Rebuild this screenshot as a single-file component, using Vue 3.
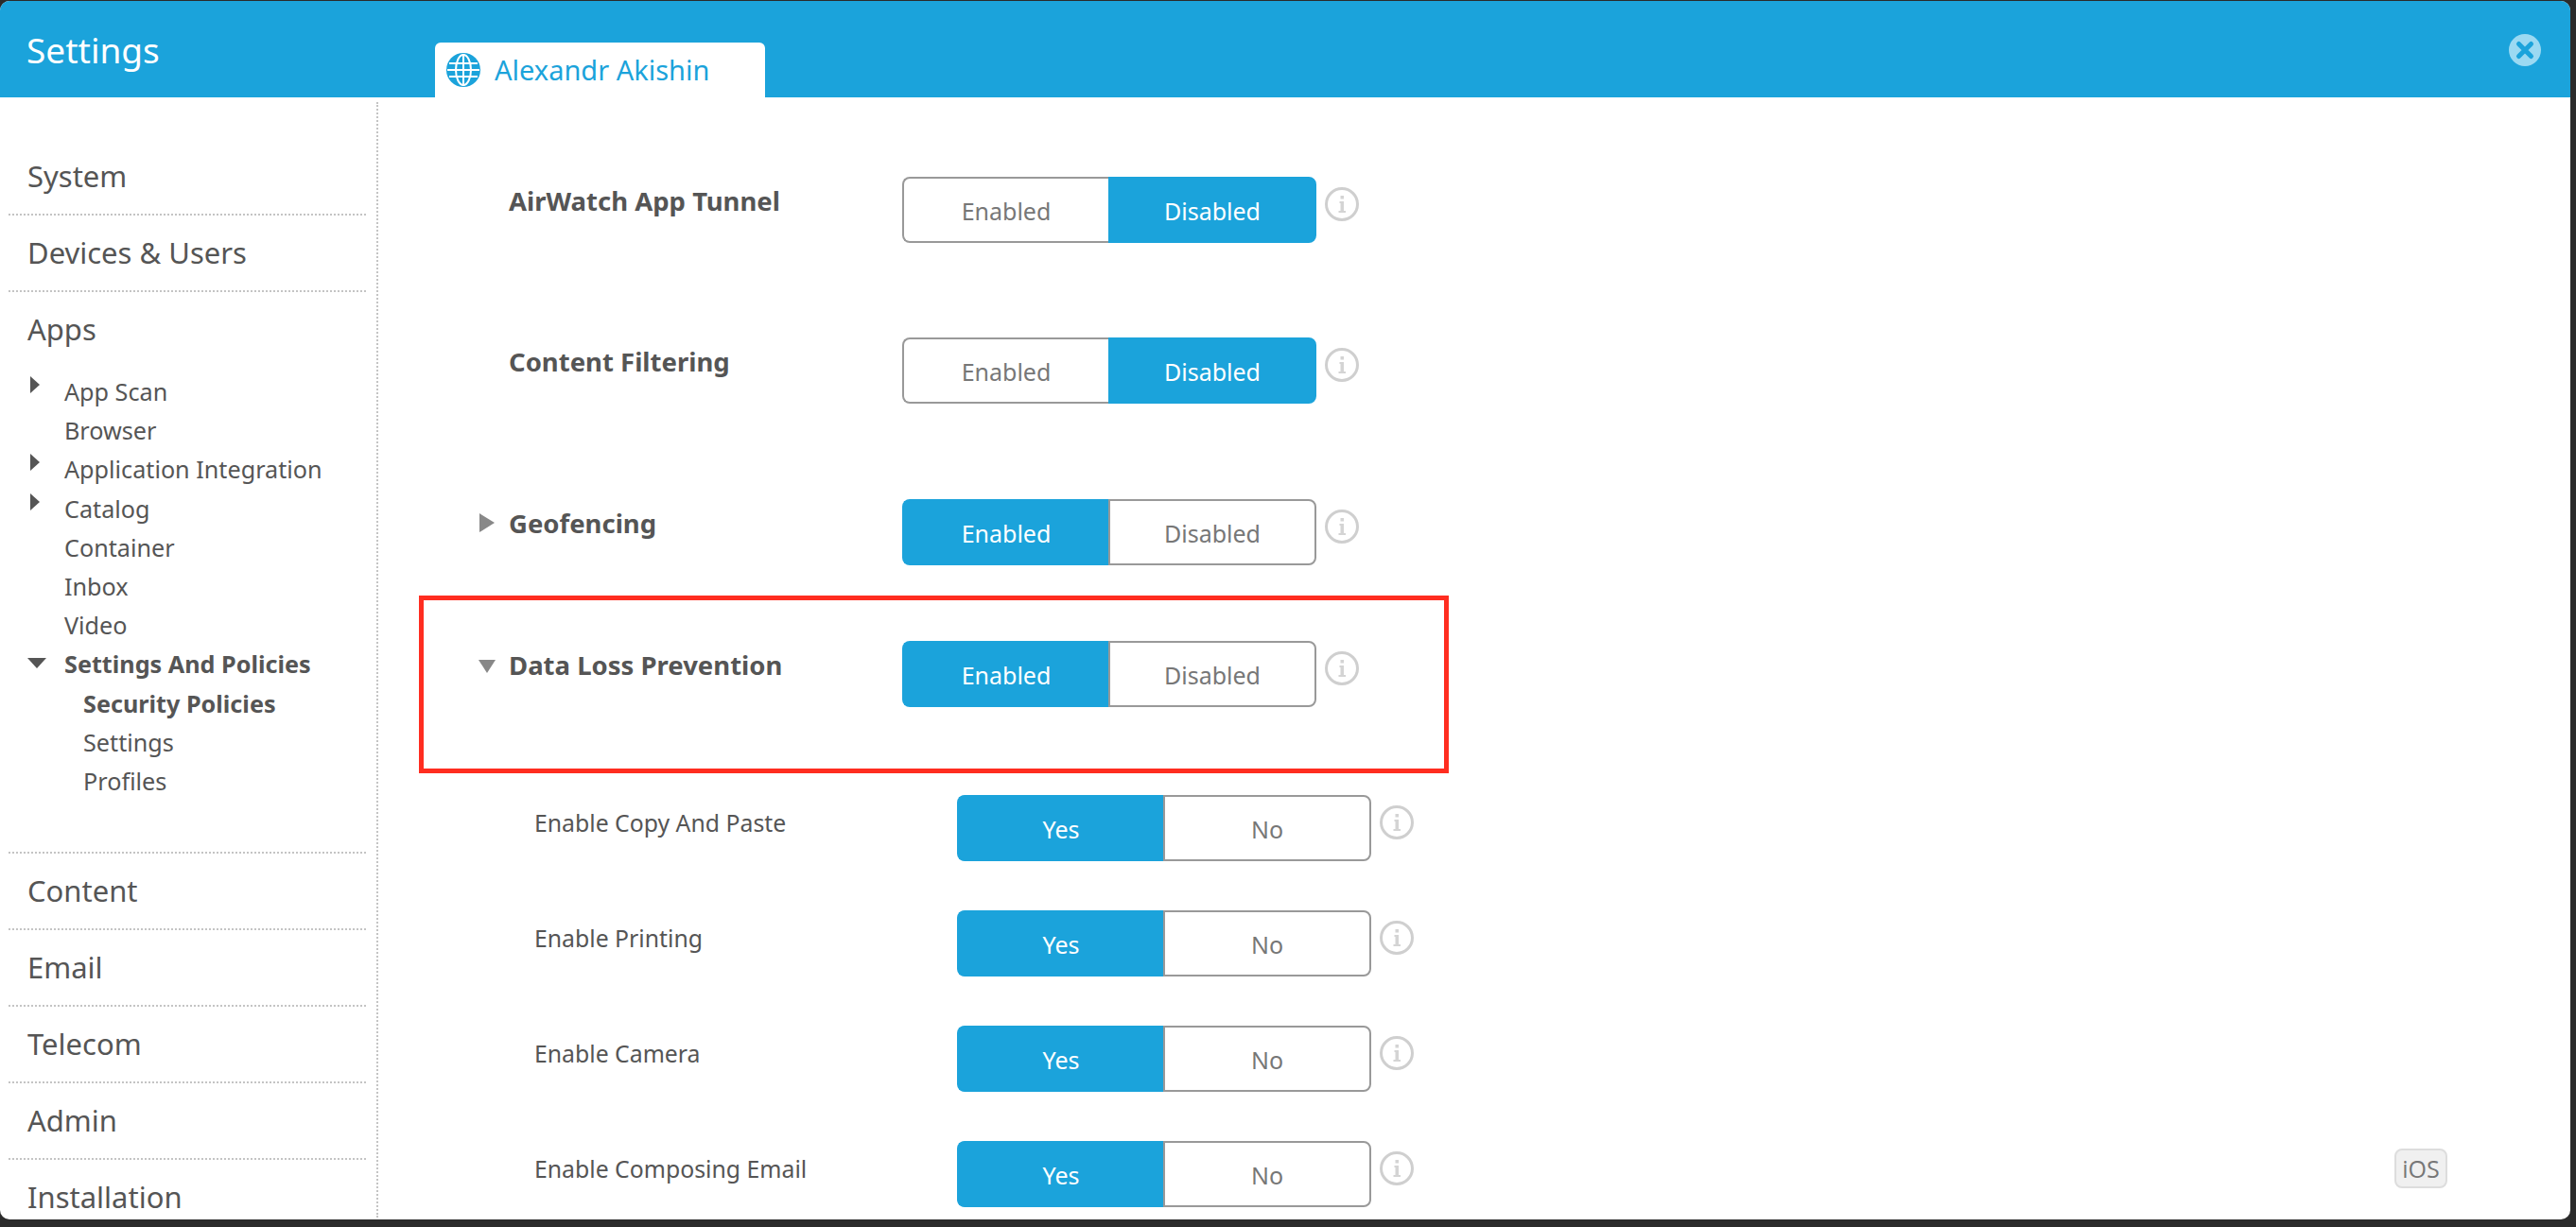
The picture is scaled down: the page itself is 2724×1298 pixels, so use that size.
<script setup>
const topItems = ['System', 'Devices & Users']
const appItems = [
  { label: 'App Scan', arrow: true },
  { label: 'Browser' },
  { label: 'Application Integration', arrow: true },
  { label: 'Catalog', arrow: true },
  { label: 'Container' },
  { label: 'Inbox' },
  { label: 'Video' },
  { label: 'Settings And Policies', open: true, bold: true },
  { label: 'Security Policies', nested: true, bold: true },
  { label: 'Settings', nested: true },
  { label: 'Profiles', nested: true }
]
const bottomItems = ['Content', 'Email', 'Telecom', 'Admin', 'Installation']
const mainRows = [
  { label: 'AirWatch App Tunnel', on: 1, cls: 'r1' },
  { label: 'Content Filtering', on: 1, cls: 'r2' },
  { label: 'Geofencing', on: 0, arrow: 'right', cls: 'r3' },
  { label: 'Data Loss Prevention', on: 0, arrow: 'down', cls: 'r4' }
]
const subRows = ['Enable Copy And Paste', 'Enable Printing', 'Enable Camera', 'Enable Composing Email']
</script>

<template>
  <div class="page">
    <div class="window">
      <header class="header">
        <div class="title">Settings</div>
        <div class="tab">
          <svg class="globe" viewBox="0 0 36 36">
            <circle cx="18" cy="18" r="18" fill="#1ba3db" />
            <g fill="none" stroke="#fff" stroke-width="2">
              <ellipse cx="18" cy="18" rx="8" ry="16" />
              <path d="M18 1V35M3 11H33M1 18H35M3 25H33" />
            </g>
          </svg>
          <span>Alexandr Akishin</span>
        </div>
        <svg class="close" viewBox="0 0 34 34">
          <circle cx="17" cy="17" r="17" fill="#9bd9f2" />
          <path d="M10.5 10.5L23.5 23.5M23.5 10.5L10.5 23.5" stroke="#1ba3db" stroke-width="5" stroke-linecap="round" />
        </svg>
      </header>
      <div class="body">
        <aside class="sidebar">
          <div v-for="t in topItems" :key="t" class="section">{{ t }}</div>
          <div class="section noline">Apps</div>
          <ul class="apps">
            <li v-for="a in appItems" :key="a.label" :class="{ bold: a.bold, nested: a.nested }">
              <i v-if="a.arrow" class="tri-right"></i>
              <i v-if="a.open" class="tri-down"></i>
              {{ a.label }}
            </li>
          </ul>
          <div v-for="b in bottomItems" :key="b" class="section">{{ b }}</div>
        </aside>
        <main class="main">
          <div class="redbox"></div>
          <div v-for="r in mainRows" :key="r.label" class="row" :class="r.cls">
            <div class="label">
              <i v-if="r.arrow === 'right'" class="g-right"></i>
              <i v-if="r.arrow === 'down'" class="g-down"></i>
              {{ r.label }}
            </div>
            <div class="toggle">
              <span :class="{ active: r.on === 0 }">Enabled</span>
              <span :class="{ active: r.on === 1 }">Disabled</span>
            </div>
            <svg class="info" viewBox="0 0 36 36">
              <circle cx="18" cy="18" r="16.5" fill="none" stroke="#cfcfcf" stroke-width="3" />
              <path d="M15.5 15H20V25H22V27H14.5V25H16.5V17H15.5ZM16.5 9H20V12.5H16.5Z" fill="#d4d4d4" />
            </svg>
          </div>
          <div v-for="s in subRows" :key="s" class="row sub">
            <div class="label">{{ s }}</div>
            <div class="toggle">
              <span class="active">Yes</span>
              <span>No</span>
            </div>
            <svg class="info" viewBox="0 0 36 36">
              <circle cx="18" cy="18" r="16.5" fill="none" stroke="#cfcfcf" stroke-width="3" />
              <path d="M15.5 15H20V25H22V27H14.5V25H16.5V17H15.5ZM16.5 9H20V12.5H16.5Z" fill="#d4d4d4" />
            </svg>
          </div>
          <div class="badge">iOS</div>
        </main>
      </div>
    </div>
  </div>
</template>

<style>
html, body { margin: 0; background: #2b2b2b; overflow: hidden; }
</style>

<style scoped>
.page { height: 1298px; padding-top: 1px; box-sizing: border-box; background: #2b2b2b; font-family: "Noto Sans", sans-serif; color: #555; }
.window { width: 2718px; height: 1289px; background: #fff; border-radius: 10px; overflow: hidden; display: flex; flex-direction: column; }
.header { height: 102px; flex: none; background: #1ba3db; display: flex; align-items: flex-end; position: relative; }
.title { color: #fff; font-size: 37px; width: 460px; padding-left: 28px; box-sizing: border-box; align-self: center; flex: none; }
.tab { width: 349px; height: 58px; background: #fff; border-radius: 6px 6px 0 0; display: flex; align-items: center; padding-left: 12px; box-sizing: border-box; color: #1ba3db; font-size: 29px; gap: 15px; }
.tab span { position: relative; top: -1px; }
.globe { width: 36px; height: 36px; flex: none; }
.close { width: 34px; height: 34px; position: absolute; right: 31px; top: 35px; }
.body { flex: 1; display: flex; min-height: 0; }
.sidebar { width: 400px; flex: none; padding: 39px 11px 0 9px; box-sizing: border-box; border-right: 2px dotted #c4c4c4; margin: 5px 0 2px; overflow: hidden; }
.section { height: 81px; flex: none; box-sizing: border-box; padding-left: 20px; font-size: 31px; line-height: 78px; border-bottom: 2px dotted #c4c4c4; }
.noline { border-bottom: none; height: 85px; }
.apps { list-style: none; margin: 0; padding: 0 0 0 59px; height: 507px; border-bottom: 2px dotted #c4c4c4; box-sizing: content-box; }
.apps li { height: 41.2px; line-height: 41px; font-size: 25.2px; position: relative; white-space: nowrap; }
.apps li.bold { font-weight: 700; }
.apps li.nested { padding-left: 20px; }
.tri-right { position: absolute; left: -36px; top: 4px; border-left: 10px solid #555; border-top: 9px solid transparent; border-bottom: 9px solid transparent; }
.tri-down { position: absolute; left: -39px; top: 14px; border-top: 11px solid #555; border-left: 10px solid transparent; border-right: 10px solid transparent; }
.main { flex: 1; position: relative; min-width: 0; padding-top: 84px; }
.row { display: flex; align-items: flex-start; height: 70px; }
.r1 { margin-bottom: 100px; }
.r2 { margin-bottom: 101px; }
.r3 { margin-bottom: 80px; }
.r4 { margin-bottom: 93px; }
.sub { margin-bottom: 52px; }
.label { font-weight: 700; font-size: 27.5px; padding-left: 138px; width: 554px; box-sizing: border-box; position: relative; line-height: 40px; margin-top: 6px; white-space: nowrap; flex: none; }
.sub .label { font-weight: 400; font-size: 24.8px; padding-left: 165px; width: 612px; margin-top: 9px; }
.g-right { position: absolute; left: 107px; top: 9px; border-left: 16px solid #888; border-top: 10px solid transparent; border-bottom: 10px solid transparent; }
.g-down { position: absolute; left: 106px; top: 14px; border-top: 14px solid #888; border-left: 9px solid transparent; border-right: 9px solid transparent; }
.toggle { display: flex; height: 70px; flex: none; }
.toggle span { box-sizing: border-box; display: flex; align-items: center; justify-content: center; font-size: 25px; color: #777; border: 2px solid #999; padding-top: 1px; }
.toggle span:first-child { width: 218px; border-radius: 8px 0 0 8px; border-right: none; }
.toggle span:last-child { width: 220px; border-radius: 0 8px 8px 0; }
.toggle span.active { background: #1ba3db; border-color: #1ba3db; color: #fff; }
.info { width: 36px; height: 36px; margin: 11px 0 0 9px; flex: none; }
.redbox { position: absolute; left: 43px; top: 527px; width: 1089px; height: 188px; box-sizing: border-box; border: 5px solid #ff2d20; }
.badge { position: absolute; right: 130px; top: 1112px; width: 56px; height: 42px; box-sizing: border-box; background: #f0f0f0; border: 2px solid #ddd; border-radius: 8px; display: flex; align-items: center; justify-content: center; font-family: "Open Sans", sans-serif; font-size: 25px; color: #777; }
</style>
